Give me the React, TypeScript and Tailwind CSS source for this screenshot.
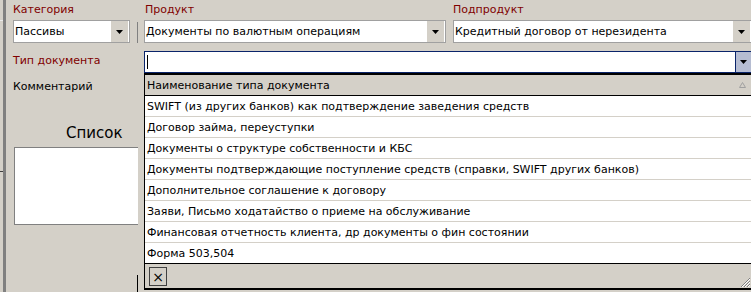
import React from "react";

const Arrow = () => (
  <svg width="7" height="4" viewBox="0 0 7 4" className="block">
    <path d="M0 0H7L3.5 4Z" fill="#000" />
  </svg>
);

const Combo = ({ text, w }: { text: string; w: string }) => (
  <div className={`${w} h-[23px] shrink-0 flex bg-white border border-[#a0a0a0]`}>
    <div className="flex-1 flex items-center pl-[1px] whitespace-nowrap overflow-hidden">{text}</div>
    <div className="w-[17px] mr-[1px] bg-[#d4d0c8] flex items-center justify-center">
      <Arrow />
    </div>
  </div>
);

const rows = [
  "SWIFT (из других банков) как подтверждение заведения средств",
  "Договор займа, переуступки",
  "Документы о структуре собственности и КБС",
  "Документы подтверждающие поступление средств (справки, SWIFT других банков)",
  "Дополнительное соглашение к договору",
  "Заяви, Письмо ходатайство о приеме на обслуживание",
  "Финансовая отчетность клиента, др документы о фин состоянии",
  "Форма 503,504",
];

export default function App() {
  return (
    <div className="relative w-[751px] h-[292px] overflow-hidden bg-[#d4d0c8] flex font-['DejaVu_Sans',sans-serif] text-[11px] leading-[13px] text-black">
      {/* left strip */}
      <div className="w-[3px] shrink-0 flex flex-col">
        <div className="h-[21px] border-b border-[#ececec]" />
        <div className="h-[150px]" />
        <div className="h-px bg-[#404040]" />
      </div>
      <div className="w-[3px] shrink-0 bg-[#808080]" />

      {/* main */}
      <div className="flex-1 pl-[7px] flex flex-col min-w-0">
        {/* top row */}
        <div className="flex items-start">
          <div className="w-[117px] shrink-0 flex flex-col">
            <div className="h-[20px] pt-[3px] text-[#800000]">Категория</div>
            <Combo text="Пассивы" w="w-[117px]" />
          </div>
          <div className="ml-[7px] mt-[22px] w-px h-[21px] shrink-0 bg-[#808080]" />
          <div className="ml-[6px] w-[302px] shrink-0 flex flex-col">
            <div className="h-[20px] pt-[3px] pl-[1px] text-[#800000]">Продукт</div>
            <Combo text="Документы по валютным операциям" w="w-[302px]" />
          </div>
          <div className="ml-[7px] w-[299px] shrink-0 flex flex-col">
            <div className="h-[20px] pt-[3px] text-[#800000]">Подпродукт</div>
            <Combo text="Кредитный договор от нерезидента" w="w-[299px]" />
          </div>
        </div>

        {/* type row */}
        <div className="mt-[8px] flex items-start">
          <div className="w-[131px] shrink-0 pt-[3px] text-[#800000]">Тип документа</div>
          <div className="w-[608px] h-[22px] shrink-0 flex bg-white border border-[#0a246a]">
            <div className="flex-1 flex items-center pl-[2px]">
              <div className="w-px h-[14px] bg-black" />
            </div>
            <div className="w-[16px] border-l border-[#0a246a] bg-[#b6bdd2] flex items-center justify-center">
              <Arrow />
            </div>
          </div>
        </div>

        <div className="mt-[7px]">Комментарий</div>

        <div className="mt-[31px] ml-[53px] text-[15px] leading-[18px]">Список</div>

        <div className="mt-[5px] ml-[1px] w-[124px] h-[78px] bg-white border-t border-l border-b border-[#808080]" />

        <div className="mt-[50px] ml-[124px] w-px h-[17px] bg-black" />
      </div>

      {/* dropdown popup */}
      <div className="absolute left-[144px] top-[73px] w-[608px] flex flex-col border-l border-t-2 border-black bg-white">
        <div className="h-[21px] bg-[#d4d0c8] border-b border-black flex items-center justify-between pl-[2px] pr-[6px]">
          <span>Наименование типа документа</span>
          <svg width="7" height="6" viewBox="0 0 7 6" className="block">
            <path d="M3.5 0.5L6.5 5.5H0.5Z" fill="none" stroke="#a0a0a0" strokeWidth="1" />
          </svg>
        </div>
        {rows.map((r, i) => (
          <div
            key={i}
            className={
              i < rows.length - 1
                ? "h-[21px] border-b border-[#d4d0c8] flex items-center pl-[2px] whitespace-nowrap"
                : "h-[20px] flex items-center pl-[2px] whitespace-nowrap"
            }
          >
            {r}
          </div>
        ))}
        <div className="h-[27px] bg-[#d4d0c8] border-t border-b-2 border-black flex justify-between items-start">
          <div className="mt-[3px] ml-[4px] w-[18px] h-[19px] border border-[#404040] flex items-center justify-center text-[14px] leading-[14px]">
            ×
          </div>
          <svg width="11" height="11" viewBox="0 0 11 11" className="block self-end mr-[1px]">
            <path d="M10 1L1 10M10 4L4 10M10 7L7 10" stroke="#808080" strokeWidth="1" />
            <path d="M10 2L2 10M10 5L5 10M10 8L8 10" stroke="#ffffff" strokeWidth="1" />
          </svg>
        </div>
      </div>
    </div>
  );
}
